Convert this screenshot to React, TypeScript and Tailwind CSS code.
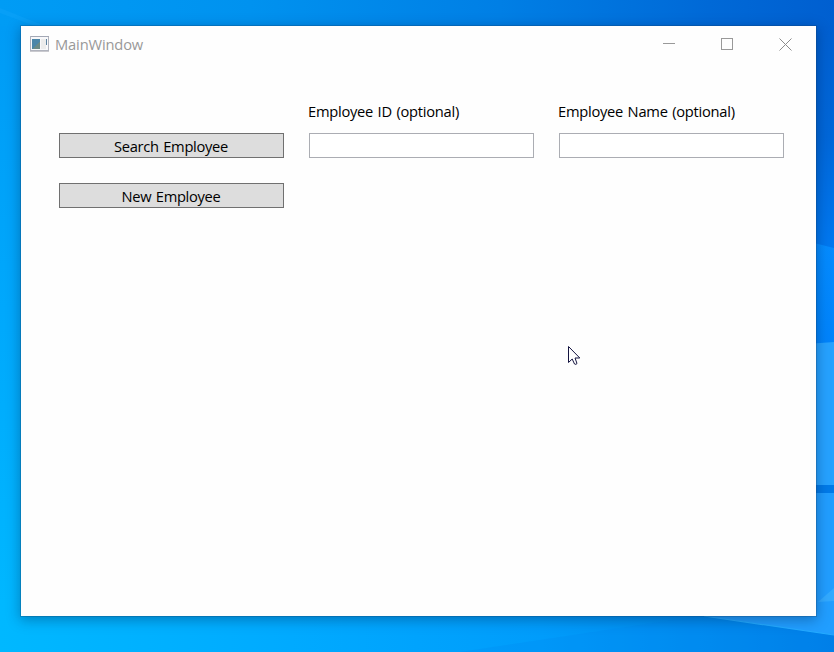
import type { ReactNode } from 'react';

function Wallpaper() {
  return (
    <svg className="absolute inset-0" width="834" height="652" viewBox="0 0 834 652" aria-hidden="true">
      <defs>
        <linearGradient id="top" x1="0" x2="1" y1="0" y2="0">
          <stop offset="0" stopColor="#009cf5" />
          <stop offset="0.3" stopColor="#0092ef" />
          <stop offset="0.6" stopColor="#007fe5" />
          <stop offset="0.85" stopColor="#0069d7" />
          <stop offset="1" stopColor="#005fd0" />
        </linearGradient>
        <linearGradient id="left" x1="0" x2="0" y1="0" y2="1">
          <stop offset="0" stopColor="#009bf5" />
          <stop offset="0.45" stopColor="#00a8fc" />
          <stop offset="0.95" stopColor="#00b8ff" />
        </linearGradient>
        <linearGradient id="bottom" x1="0" x2="1" y1="0" y2="0">
          <stop offset="0" stopColor="#00b8ff" />
          <stop offset="0.35" stopColor="#00aaff" />
          <stop offset="0.65" stopColor="#009cfb" />
          <stop offset="0.85" stopColor="#008bef" />
          <stop offset="1" stopColor="#007de6" />
        </linearGradient>
        <linearGradient id="right" x1="0" x2="0" y1="0" y2="1">
          <stop offset="0" stopColor="#005fd0" />
          <stop offset="0.5" stopColor="#0067d9" />
          <stop offset="1" stopColor="#0078f0" />
        </linearGradient>
        <linearGradient id="beam" x1="0" x2="0" y1="0" y2="1">
          <stop offset="0" stopColor="#058cff" />
          <stop offset="1" stopColor="#0083fb" />
        </linearGradient>
      </defs>
      <rect width="834" height="40" fill="url(#top)" />
      <rect y="26" width="40" height="626" fill="url(#left)" />
      <path d="M0 8 L40 24 L40 28 L0 13Z" fill="#12a5fa" opacity="0.4" />
      <rect y="600" width="834" height="52" fill="url(#bottom)" />
      <path d="M460 652 L700 616 L834 616 L834 652Z" fill="#0088ee" opacity="0.25" />
      <rect x="806" y="26" width="28" height="222" fill="url(#right)" />
      <path d="M806 241 L834 248 V346 H806Z" fill="url(#beam)" />
      <path d="M806 344 L834 342 V485 H806Z" fill="#26a2ff" />
      <rect x="806" y="485" width="28" height="8" fill="#007ae8" />
      <path d="M806 493 H834 V635 L704 616 H806Z" fill="#219eff" />
      <path d="M818 602 L834 588 V601Z" fill="#32aaff" />
      <path d="M704 616 L834 635" stroke="#24aaff" strokeWidth="1.2" />
    </svg>
  );
}

function AppIcon() {
  return (
    <svg width="20" height="16" viewBox="0 0 20 16" shapeRendering="crispEdges" aria-hidden="true">
      <rect x="0.5" y="0.5" width="18" height="14" fill="#f8f8fa" stroke="#b0b3bd" />
      <rect x="1" y="0" width="18" height="1" fill="#a3a8b5" />
      <rect x="0" y="15" width="19" height="1" fill="#c9c9ce" />
      <rect x="2" y="3" width="8" height="10" fill="#4c86a8" />
      <path d="M10 5 V13 H3Z" fill="#6b8a86" />
      <rect x="11" y="3" width="5" height="10" fill="#ececec" />
      <rect x="16" y="3" width="1" height="6" fill="#5e83a0" />
    </svg>
  );
}

function TitleBar() {
  return (
    <header className="flex h-9 items-center pl-[9px] pr-6">
      <AppIcon />
      <h1 className="ml-[5px] grow whitespace-nowrap text-[14.7px] leading-9 tracking-[-0.15px] text-[#999999]">MainWindow</h1>
      <div className="flex items-center gap-[45px]">
        <button className="block" aria-label="Minimize">
          <svg width="13" height="13" shapeRendering="crispEdges"><path d="M0 5.5H12" stroke="#999" /></svg>
        </button>
        <button className="block" aria-label="Maximize">
          <svg width="13" height="13" shapeRendering="crispEdges"><rect x="0.5" y="0.5" width="11" height="11" fill="none" stroke="#999" /></svg>
        </button>
        <button className="block" aria-label="Close">
          <svg width="13" height="13"><path d="M0.5 0.5 L12.5 12.5 M12.5 0.5 L0.5 12.5" stroke="#8c8c8c" /></svg>
        </button>
      </div>
    </header>
  );
}

function ActionButton({ children }: { children: ReactNode }) {
  return (
    <button className="flex h-[25px] w-[225px] items-center justify-center border border-[#707070] bg-[#dddddd] pr-px text-[14.7px] leading-5 tracking-[-0.3px] text-black [word-spacing:1px]">
      <span className="pt-px">{children}</span>
    </button>
  );
}

function Field({ label }: { label: string }) {
  return (
    <label className="flex w-[225px] flex-col gap-3">
      <span className="-ml-px whitespace-nowrap text-[14.7px] leading-5 tracking-[-0.26px] text-black [word-spacing:1px]">{label}</span>
      <input className="block h-[25px] w-full border border-[#abadb3] bg-white px-1 outline-none" />
    </label>
  );
}

export default function App() {
  return (
    <div className="relative h-[652px] w-[834px] overflow-hidden bg-[#009cf5] pl-[21px] pt-[26px] font-['Open_Sans',sans-serif]">
      <Wallpaper />
      <main className="relative h-[590px] w-[795px] bg-[#fefefe] shadow-[0_0_0_1px_rgba(20,60,100,0.25),0_3px_12px_1px_rgba(0,30,70,0.35)]">
        <TitleBar />
        <div className="flex items-end gap-[25px] pl-[38px] pt-[39px]">
          <ActionButton>Search Employee</ActionButton>
          <Field label="Employee ID (optional)" />
          <Field label="Employee Name (optional)" />
        </div>
        <div className="pl-[38px] pt-[25px]">
          <ActionButton>New Employee</ActionButton>
        </div>
      </main>
      <svg className="absolute left-[568px] top-[346px]" width="13" height="20" viewBox="0 0 13 20" aria-hidden="true">
        <path d="M0.5 0.5 V16.5 L4.2 13 L6.5 18 Q8 19 9 17.5 L7 12 H11.8Z" fill="white" stroke="#141440" />
      </svg>
    </div>
  );
}
